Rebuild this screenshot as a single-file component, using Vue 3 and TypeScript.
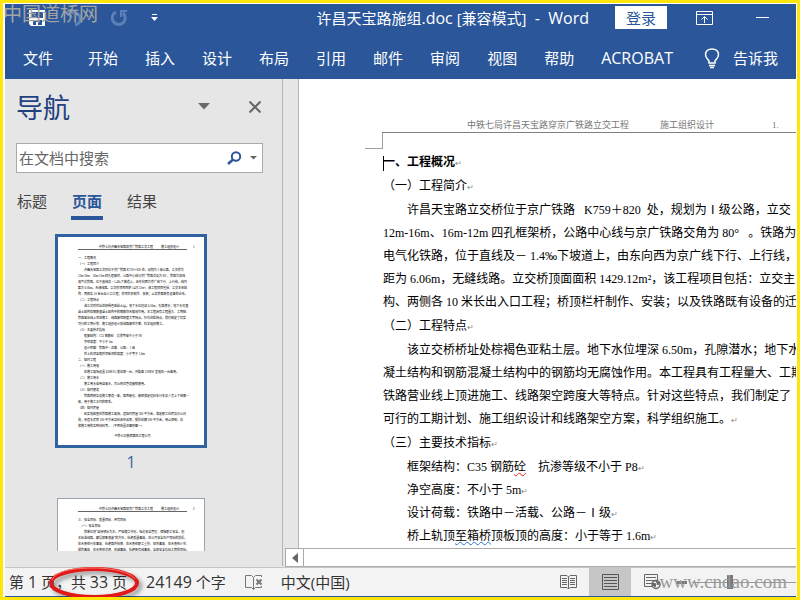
<script setup lang="ts">
import { ref } from 'vue'

interface Paragraph {
  lines: string[]
  kind: 'title' | 'heading' | 'body'
  open?: boolean
}

const tabs: string[] = ['文件', '开始', '插入', '设计', '布局', '引用', '邮件', '审阅', '视图', '帮助', 'ACROBAT']
const navTabs: string[] = ['标题', '页面', '结果']
const activeNav = ref('页面')
const query = ref('')
const zoom = ref(100)

const paragraphs: Paragraph[] = [
  { kind: 'title', lines: ['一、工程概况'] },
  { kind: 'heading', lines: ['（一）工程简介'] },
  {
    kind: 'body',
    open: true,
    lines: [
      '许昌天宝路立交桥位于京广铁路   K759＋820  处，规划为Ⅰ级公路，立交',
      '12m-16m、16m-12m 四孔框架桥，公路中心线与京广铁路交角为 80°   。铁路为',
      '电气化铁路，位于直线及－ 1.4‰下坡道上，由东向西为京广线下行、上行线，',
      '距为 6.06m，无缝线路。立交桥顶面面积 1429.12m²，该工程项目包括：立交主',
      '构、两侧各 10 米长出入口工程；桥顶栏杆制作、安装；以及铁路既有设备的迁',
    ],
  },
  { kind: 'heading', lines: ['（二）工程特点'] },
  {
    kind: 'body',
    lines: [
      '该立交桥桥址处棕褐色亚粘土层。地下水位埋深 6.50m，孔隙潜水；地下水',
      '凝土结构和钢筋混凝土结构中的钢筋均无腐蚀作用。本工程具有工程量大、工期',
      '铁路营业线上顶进施工、线路架空跨度大等特点。针对这些特点，我们制定了',
      '可行的工期计划、施工组织设计和线路架空方案，科学组织施工。',
    ],
  },
  { kind: 'heading', lines: ['（三）主要技术指标'] },
]

const thumbOne: string[] = [
  '一、工程概况',
  '（一）工程简介',
  '　　许昌天宝路立交桥位于京广铁路 K759＋820 处，规划为Ⅰ级公路，立交桥为',
  '12m-16m、16m-12m 四孔框架桥，公路中心线与京广铁路交角为 80°，铁路为双线',
  '电气化铁路，位于直线及－1.4‰下坡道上，由东向西为京广线下行、上行线，线间',
  '距为 6.06m，无缝线路。立交桥顶面面积 1429.12m²，该工程项目包括：立交主体结',
  '构、两侧各 10 米长出入口工程；桥顶栏杆制作、安装；以及铁路既有设备的迁改。',
  '（二）工程特点',
  '　　该立交桥桥址处棕褐色亚粘土层。地下水位埋深 6.50m，孔隙潜水；地下水对混',
  '凝土结构和钢筋混凝土结构中的钢筋均无腐蚀作用。本工程具有工程量大、工期短、',
  '铁路营业线上顶进施工、线路架空跨度大等特点。针对这些特点，我们制定了切实',
  '可行的工期计划、施工组织设计和线路架空方案，科学组织施工。',
  '（三）主要技术指标',
  '　　框架结构：C35 钢筋砼　抗渗等级不小于 P8',
  '　　净空高度：不小于 5m',
  '　　设计荷载：铁路中－活载、公路－Ⅰ级',
  '　　桥上轨顶至箱桥顶板顶的高度：小于等于 1.6m',
  '二、临时工程',
  '（一）施工用电',
  '　　在施工现场设置 630KVA 变压器一台，并配备 120KW 发电机一台备用。',
  '（二）施工用水',
  '　　施工用水采用自来水，可从附近管道接取使用。',
  '（三）临时便道',
  '　　铁路两侧各设施工便道一条，路面硬化，能够满足运料车行车及人员上下班需一',
  '致，用于施工之间的联系。',
  '（四）临时房屋',
  '　　经实地勘查在铁路施工现场，建临时房屋 300 平方米，满足职工住房及办公问',
  '题，另建水泥库 100 平方米及料具杂品库，搅拌机棚 200 平方米，用以预制，存',
  '放施工用的各种材料等。（平面布置见图附图一）',
]

const thumbTwo: string[] = [
  '三、安全目标、质量目标、环境目标',
  '　（一）安全目标',
  '　　我单位将“坚持预防为主，严格遵章守纪，强化安全管理、保障职工安全，创',
  '本标准线路，赢得顾客满意”的方针，杜绝质量事故，在公司安全生产目标的前提，',
  '在无责任行车事故、杜绝路外险情、在无责任职工重伤、轻伤事故、在无责任火灾、',
  '爆炸事故、在无责任交通、机械事故，杜绝既有线事故，全部安全指标工程的目标。',
]
</script>

<template>
  <div class="window">
    <header class="head">
      <div class="titlebar">
        <div class="quick">
          <button class="plain" aria-label="保存">
            <svg width="16" height="16" viewBox="0 0 16 16">
              <path d="M0 0H16V16H2L0 14Z" fill="#fff" />
              <path d="M2 2H14V8H2ZM4 10H13V15H9V12H7V15H4Z" fill="#2b579a" />
            </svg>
          </button>
          <button class="plain undo" aria-label="撤销">
            <svg width="24" height="18" viewBox="0 0 24 18" fill="none" stroke="#5d80b6" stroke-width="3">
              <path d="M13 4C24 2 25 15 17 16" /><path d="M13 0L9 4L14 8" stroke-width="2" />
            </svg>
          </button>
          <button class="plain redo" aria-label="重复">
            <svg width="18" height="18" viewBox="0 0 18 18" fill="none" stroke="#5d80b6" stroke-width="3">
              <path d="M6 3A6.500 6.500 0 1 0 13 4" /><path d="M17 2H11V8" stroke-width="2" />
            </svg>
          </button>
          <button class="plain more" aria-label="自定义快速访问工具栏">
            <svg width="7" height="8" viewBox="0 0 7 8" fill="#fff"><path d="M1 0H6V1H1ZM0 3H7L3.500 7Z" /></svg>
          </button>
        </div>
        <h1 class="doc-name">许昌天宝路施组<span class="latin">.doc</span> [兼容模式]<span class="latin">&nbsp; -&nbsp; Word</span></h1>
        <button class="login">登录</button>
        <button class="plain display" aria-label="功能区显示选项">
          <svg width="17" height="14" viewBox="0 0 17 14" fill="none" stroke="#fff">
            <path d="M0.500 0.500H16.500V13.500H0.500ZM0.500 3.500H16.500M8.500 12V6M5.500 8.500L8.500 5.500L11.500 8.500" />
          </svg>
        </button>
        <button class="plain minimise" aria-label="最小化">
          <svg width="13" height="3" viewBox="0 0 13 3"><path d="M0 1H13V2H0Z" fill="#fff" /></svg>
        </button>
      </div>
      <nav class="ribbon">
        <button v-for="t in tabs" :key="t" class="plain tab">{{ t }}</button>
        <button class="plain tell">
          <svg width="16" height="21" viewBox="0 0 16 21" fill="none" stroke="#fff" stroke-width="1.500">
            <path d="M5 15V13C4 11 1.500 10 1.500 6.500C1.500 3 4.500 1 8 1S14.500 3 14.500 6.500C14.500 10 12 11 11 13V15ZM5 17.500H11M6 19.500H10" />
          </svg>
          <span>告诉我</span>
        </button>
      </nav>
      <div class="mark-top">中国道桥网</div>
    </header>

    <main class="work">
      <aside class="nav">
        <div class="nav-head">
          <h2>导航</h2>
          <button class="plain" aria-label="任务窗格选项">
            <svg width="12" height="7" viewBox="0 0 12 7"><path d="M0 0H12L6 6.500Z" fill="#6a6a6a" /></svg>
          </button>
          <button class="plain close" aria-label="关闭">
            <svg width="12" height="12" viewBox="0 0 12 12" stroke="#666" stroke-width="2"><path d="M0.500 0.500L11.500 11.500M11.500 0.500L0.500 11.500" /></svg>
          </button>
        </div>
        <div class="search">
          <input v-model="query" type="text" placeholder="在文档中搜索" aria-label="在文档中搜索" />
          <button class="plain" aria-label="搜索">
            <svg width="15" height="14" viewBox="0 0 15 14" fill="none" stroke="#2b579a" stroke-width="2">
              <circle cx="9" cy="5.500" r="4.200" /><path d="M6 8.500L1 13" stroke-width="2.500" />
            </svg>
          </button>
          <button class="plain drop" aria-label="搜索选项">
            <svg width="7" height="4" viewBox="0 0 7 4"><path d="M0 0H7L3.500 3.500Z" fill="#666" /></svg>
          </button>
        </div>
        <div class="nav-tabs">
          <button v-for="n in navTabs" :key="n" class="plain nav-tab" :class="{ on: n === activeNav }" @click="activeNav = n">{{ n }}</button>
        </div>
        <div class="thumbs">
          <div class="thumb selected">
            <div class="thumb-head"><span>中铁七局许昌天宝路穿京广铁路立交工程</span><span>施工组织设计</span><span>1</span></div>
            <p v-for="(l, i) in thumbOne" :key="i">{{ l }}</p>
            <div class="thumb-foot">中铁七局集团第四工程公司</div>
          </div>
          <div class="thumb-no">1</div>
          <div class="thumb">
            <div class="thumb-head"><span>中铁七局许昌天宝路穿京广铁路立交工程</span><span>施工组织设计</span><span>2</span></div>
            <p v-for="(l, i) in thumbTwo" :key="i">{{ l }}</p>
          </div>
        </div>
      </aside>

      <section class="doc-area">
        <div class="page-wrap">
          <article class="page">
            <div class="page-head">
              <span>中铁七局许昌天宝路穿京广铁路立交工程</span><span>施工组织设计</span><span class="page-no">1.</span>
            </div>
            <div class="corner"></div>
            <div class="text">
              <p v-for="(p, i) in paragraphs" :key="i" :class="p.kind">
                <span v-for="(l, j) in p.lines" :key="j" class="line">{{ l }}<span v-if="j === p.lines.length - 1 && !p.open" class="ret">↵</span></span>
              </p>
              <div class="specs">
                <p>框架结构：C35 钢筋<span class="wavy red">砼</span>　抗渗等级不小于 P8<span class="ret">↵</span></p>
                <p>净空高度：不小于 5m<span class="ret">↵</span></p>
                <p>设计荷载：铁路中－活载、公路－Ⅰ级<span class="ret">↵</span></p>
                <p>桥上轨顶<span class="wavy blue">至箱桥</span>顶板顶的高度：小于等于 1.6m<span class="ret">↵</span></p>
              </div>
            </div>
          </article>
        </div>
        <div class="hscroll">
          <button class="plain arrow" aria-label="向左滚动">
            <svg width="6" height="10" viewBox="0 0 6 10"><path d="M6 0V10L0 5Z" fill="#666" /></svg>
          </button>
          <div class="track"></div>
        </div>
      </section>
    </main>

    <footer class="status">
      <span>第 <span class="latin">1</span> 页，共 <span class="latin">33</span> 页</span>
      <span class="words"><span class="latin">24149</span> 个字</span>
      <button class="plain proof" aria-label="校对">
        <svg width="18" height="15" viewBox="0 0 18 15" fill="none" stroke="#777">
          <path d="M8.500 2.500L6.500 0.500H0.500V12.500H6.500L8.500 14.500L10.500 12.500H16.500V11M8.500 2.500V14.500M8.500 2.500L10.500 0.500H16.500V2" />
          <path d="M11.500 4.500L16.500 9.500M16.500 4.500L11.500 9.500" stroke-width="2" />
        </svg>
      </button>
      <span class="lang">中文(中国)</span>
      <div class="views">
        <button class="view" aria-label="阅读视图">
          <svg width="17" height="15" viewBox="0 0 17 15" fill="none" stroke="#666">
            <path d="M8.500 2L7 0.500H0.500V12.500H7L8.500 14L10 12.500H16.500V0.500H10ZM8.500 2V14M2 3.500H7M2 5.500H7M2 7.500H7M2 9.500H7M10 3.500H15M10 5.500H15M10 7.500H15M10 9.500H15" />
          </svg>
        </button>
        <button class="view current" aria-label="页面视图">
          <svg width="17" height="16" viewBox="0 0 17 16" fill="none" stroke="#555">
            <path d="M0.500 0.500H16.500V15.500H0.500ZM2 3.500H15M2 6.500H15M2 9.500H15M2 12.500H15" />
          </svg>
        </button>
        <button class="view" aria-label="Web 版式视图">
          <svg width="17" height="16" viewBox="0 0 17 16" fill="none" stroke="#666">
            <path d="M8 12.500H0.500V0.500H13.500V6M2 3.500H12M2 6.500H10M2 9.500H8" />
            <circle cx="12" cy="10.500" r="4" fill="#f3f3f3" stroke-width="1.500" />
            <path d="M9 9L12 10L11 13L9 11ZM12 7L15 9L14 11Z" fill="#666" />
          </svg>
        </button>
      </div>
      <button class="plain minus" aria-label="缩小">
        <svg width="10" height="3" viewBox="0 0 10 3"><path d="M0 0H10V3H0Z" fill="#777" /></svg>
      </button>
      <input v-model="zoom" class="zoom" type="range" min="10" max="260" aria-label="缩放" />
      <div class="mark-bottom">www.cndao.com</div>
      <svg class="ring" width="100" height="40" viewBox="0 0 100 40" fill="none">
        <ellipse cx="48" cy="19" rx="43" ry="14" stroke="#e01818" stroke-width="4" />
        <path d="M6 16C10 6 30 4 48 4C66 4 84 8 89 15" stroke="#ff7a6e" stroke-width="1" />
      </svg>
    </footer>
  </div>
</template>

<style>
html,
body {
  margin: 0;
  overflow: hidden;
}
</style>

<style scoped>
* {
  box-sizing: border-box;
}
.window {
  display: flex;
  flex-direction: column;
  height: 100vh;
  border: 3px solid #ffe60a;
  padding: 1px 1px 0 2px;
  background: #fff;
  font: 15px/20px "Open Sans", "Noto Sans CJK SC", sans-serif;
  color: #333;
  overflow: hidden;
}
h1,
h2,
p {
  margin: 0;
  font-weight: 400;
}
button,
input {
  font: inherit;
  color: inherit;
}
.latin {
  font-size: 16px;
}
.plain {
  display: flex;
  align-items: center;
  border: 0;
  padding: 0;
  background: none;
  white-space: nowrap;
}
.head {
  position: relative;
  flex: none;
  background: #2b579a;
  color: #fff;
}
.titlebar {
  display: flex;
  align-items: center;
  height: 27px;
}
.quick {
  display: flex;
  align-items: center;
  flex: 1;
  padding-left: 24px;
}
.undo {
  margin-left: 13px;
}
.redo {
  margin-left: 28px;
}
.more {
  margin-left: 23px;
}
.doc-name {
  font-size: 15px;
  white-space: nowrap;
}
.login {
  width: 52px;
  height: 23px;
  margin-left: 26px;
  border: 0;
  padding: 0;
  background: #fff;
  color: #2b579a;
}
.display {
  margin-left: 29px;
}
.minimise {
  margin: 0 27px 0 43px;
}
.ribbon {
  display: flex;
  align-items: center;
  gap: 27px;
  height: 48px;
  padding: 6px 18px 0;
}
.tab:first-child {
  margin-right: 8px;
}
.tab:nth-last-child(2) {
  font-size: 16px;
}
.tell {
  gap: 13px;
  margin-left: 4px;
}
.mark-top {
  position: absolute;
  left: -2px;
  top: -3px;
  font: 19px/24px "Noto Sans CJK SC", serif;
  color: #a3a5a5;
}
.work {
  display: flex;
  flex: 1;
  min-height: 0;
  background: #e6e6e6;
}
.nav {
  display: flex;
  flex-direction: column;
  flex: none;
  width: 278px;
  margin-bottom: 1px;
  border-right: 1px solid #b5b5b5;
}
.nav-head {
  display: flex;
  align-items: center;
  height: 53px;
  padding: 2px 21px 0 11px;
}
.nav-head h2 {
  flex: 1;
  padding-top: 3px;
  font-size: 27px;
  line-height: 36px;
  color: #1f427f;
}
.close {
  margin-left: 39px;
}
.search {
  display: flex;
  align-items: center;
  height: 30px;
  margin: 11px 19px 0 11px;
  border: 1px solid #ababab;
  padding: 0 5px 0 2px;
  background: #fff;
}
.search input {
  flex: 1;
  min-width: 0;
  border: 0;
  padding: 0;
  outline: 0;
  background: none;
}
.search input::placeholder {
  color: #666;
  opacity: 1;
}
.drop {
  margin-left: 8px;
}
.nav-tabs {
  display: flex;
  gap: 23px;
  padding: 18px 0 0 11px;
}
.nav-tab {
  border-bottom: 4px solid transparent;
  padding: 0 1px 5px;
  color: #444;
}
.nav-tab.on {
  border-color: #2b579a;
  color: #2b579a;
  font-weight: 700;
}
.thumbs {
  flex: 1;
  min-height: 0;
  margin: 14px 0 15px 50px;
  overflow: hidden;
}
.thumb {
  width: 148px;
  height: 210px;
  margin-left: 2px;
  border: 1px solid #9aa3b2;
  padding: 9px 17px 0 20px;
  background: #fff;
  font: 3px/6px "Liberation Serif", "Noto Sans CJK SC", serif;
  color: #000;
  white-space: pre;
  overflow: hidden;
}
.thumb.selected {
  width: 152px;
  height: 214px;
  margin-left: 0;
  border: 3px solid #2e62a0;
}
.thumb-head {
  display: flex;
  gap: 8px;
  margin-bottom: 5px;
  border-bottom: 1px solid #666;
  padding-left: 21px;
  line-height: 3px;
}
.thumb-head span:last-child {
  margin-left: 6px;
}
.thumb-foot {
  margin-top: 4px;
  text-align: center;
}
.thumb-no {
  width: 152px;
  height: 50px;
  padding-top: 4px;
  font-size: 16px;
  text-align: center;
  color: #3e65a8;
}
.doc-area {
  display: flex;
  flex-direction: column;
  flex: 1;
  min-width: 0;
  padding-left: 2px;
}
.page-wrap {
  flex: 1;
  min-height: 0;
  padding-left: 13px;
  overflow: hidden;
}
.page {
  height: 100%;
  border-left: 1px solid #b5b5b5;
  padding: 39px 0 0 66px;
  background: #fff;
  overflow: hidden;
}
.page-head {
  display: flex;
  gap: 31px;
  margin-left: 17px;
  border-bottom: 1px solid #808080;
  padding-left: 85px;
  font: 9px/14px "Liberation Serif", "Noto Sans CJK SC", serif;
  color: #777;
  white-space: nowrap;
}
.page-no {
  margin-left: 27px;
}
.corner {
  width: 18px;
  height: 16px;
  border-right: 1px solid #a0a0a0;
  border-bottom: 1px solid #a0a0a0;
}
.text {
  display: flex;
  flex-direction: column;
  gap: 1px;
  margin: 2px 0 0 18px;
  font: 12px/23px "Liberation Serif", "Noto Sans CJK SC", serif;
  color: #000;
  white-space: pre;
}
.title {
  font-weight: 700;
}
.title .line::before {
  content: "";
  display: inline-block;
  width: 1px;
  height: 15px;
  margin-right: -1px;
  background: #000;
  vertical-align: middle;
}
.line {
  display: block;
}
.body .line:first-child,
.specs {
  padding-left: 24px;
}
.ret {
  font-size: 8px;
  line-height: 8px;
  font-weight: 400;
  color: #888;
}
.wavy {
  text-decoration: underline wavy 1px;
  text-underline-offset: 1px;
}
.red {
  text-decoration-color: #e22;
}
.blue {
  text-decoration-color: #2a6fd6;
}
.hscroll {
  display: flex;
  flex: none;
  height: 19px;
  border: 1px solid #ababab;
  border-right: 0;
  background: #fff;
}
.arrow {
  justify-content: center;
  width: 18px;
  border-right: 1px solid #ababab;
}
.track {
  flex: 1;
}
.status {
  position: relative;
  display: flex;
  align-items: center;
  flex: none;
  height: 30px;
  border-top: 1px solid #c6c6c6;
  border-bottom: 1px solid #2b579a;
  padding-left: 4px;
  background: #f3f3f3;
  white-space: nowrap;
}
.words,
.proof {
  margin-left: 19px;
}
.lang {
  margin-left: 18px;
}
.views {
  display: flex;
  align-self: stretch;
  margin-left: auto;
}
.view {
  display: flex;
  align-items: center;
  justify-content: center;
  width: 42px;
  border: 0;
  padding: 0;
  background: none;
}
.view.current {
  background: #c6c6c6;
}
.minus {
  margin-left: 4px;
}
.zoom {
  appearance: none;
  width: 104px;
  height: 1px;
  margin: 0 0 0 5px;
  background: #999;
}
.zoom::-webkit-slider-thumb {
  appearance: none;
  width: 6px;
  height: 14px;
  background: #777;
}
.mark-bottom {
  position: absolute;
  right: 9px;
  top: 2px;
  font: 19px/24px "Liberation Serif", serif;
  color: #999;
}
.ring {
  position: absolute;
  left: 41px;
  top: -4px;
  filter: drop-shadow(3px 3px 2px #0006);
}
</style>
